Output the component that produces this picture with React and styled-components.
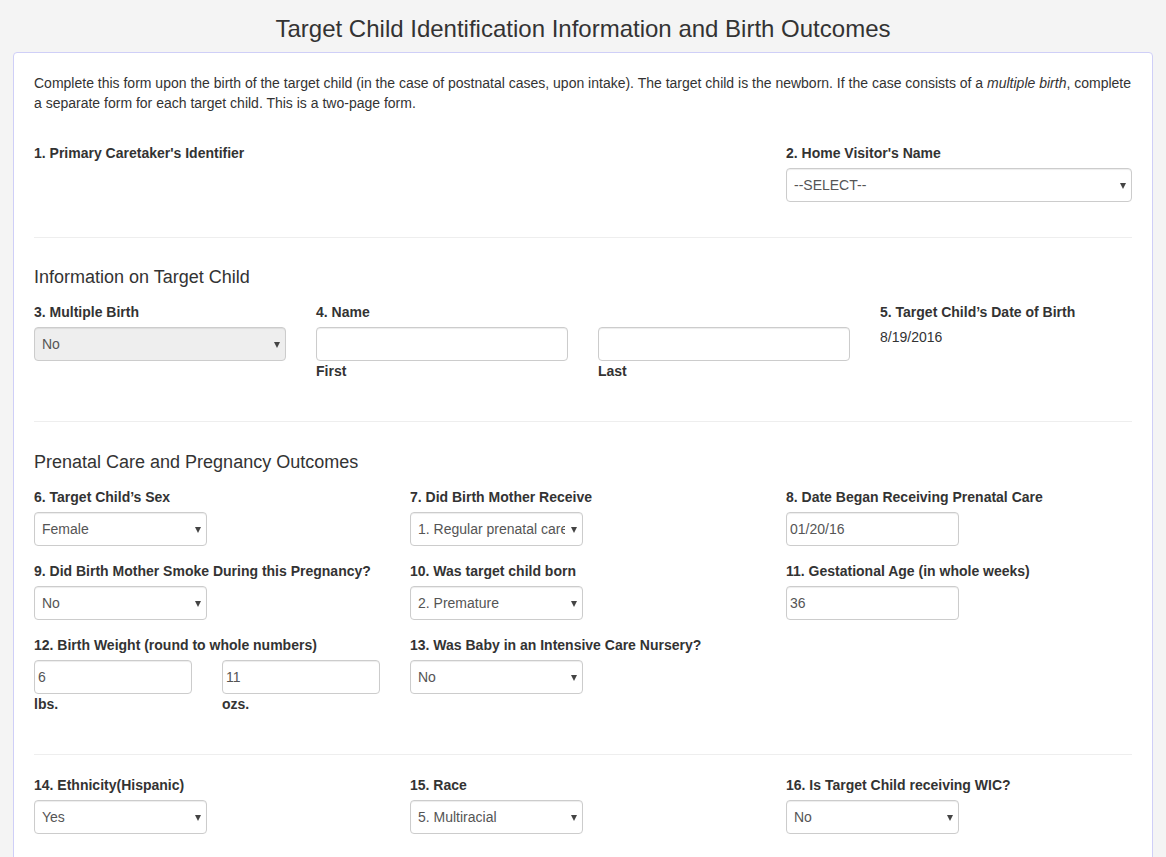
import React from "react";
import styled, { createGlobalStyle } from "styled-components";

const Global = createGlobalStyle`
  html, body { margin: 0; padding: 0; overflow: hidden; }
  body {
    background: #f4f4f4;
    font-family: "Liberation Sans", Arial, sans-serif;
    font-size: 14px;
    line-height: 20px;
    color: #333;
  }
  * { box-sizing: border-box; }
`;

const Page = styled.div`
  padding: 0 13px;
`;

const Title = styled.h1`
  margin: 0;
  padding: 16px 0 10px;
  font-size: 24px;
  line-height: 26px;
  font-weight: 400;
  text-align: center;
  color: #333;
`;

const Panel = styled.div`
  background: #fff;
  border: 1px solid #cfcff7;
  border-radius: 4px;
  padding: 20px 20px 80px;
`;

const Intro = styled.p`
  margin: 0 0 30px;
`;

const Row = styled.div`
  display: flex;
  margin: 0 -15px;
`;

const Col = styled.div`
  width: ${(p) => (p.$span / 12) * 100}%;
  padding: 0 15px;
`;

const Group = styled.div`
  padding-bottom: 15px;
`;

const Label = styled.label`
  display: block;
  font-weight: 700;
  margin-bottom: 5px;
`;

const Value = styled.div`
  color: #333;
`;

const SelectWrap = styled.div`
  position: relative;
  width: ${(p) => p.$w || "100%"};
`;

const Select = styled.select`
  display: block;
  width: 100%;
  height: 34px;
  padding: 6px 17px 6px 7px;
  font-family: inherit;
  font-size: 14px;
  color: #555;
  background-color: ${(p) => (p.disabled ? "#eee" : "#fff")};
  border: 1px solid #ccc;
  border-radius: 4px;
  box-shadow: inset 0 1px 1px rgba(0, 0, 0, 0.075);
  appearance: none;
  -webkit-appearance: none;
  opacity: 1;
`;

const Arrow = styled.span`
  position: absolute;
  right: 6px;
  top: 15px;
  width: 0;
  height: 0;
  border-left: 3.5px solid transparent;
  border-right: 3.5px solid transparent;
  border-top: 6px solid #444;
  pointer-events: none;
`;

const Input = styled.input`
  display: block;
  width: ${(p) => p.$w || "100%"};
  height: 34px;
  padding: 6px 3px;
  font-family: inherit;
  font-size: 14px;
  color: #555;
  background: #fff;
  border: 1px solid #ccc;
  border-radius: 4px;
  box-shadow: inset 0 1px 1px rgba(0, 0, 0, 0.075);
`;

const Rule = styled.hr`
  margin: 20px 0;
  border: 0;
  border-top: 1px solid #eee;
`;

const Heading = styled.h4`
  margin: ${(p) => p.$top || 30}px 0 15px;
  font-size: 18px;
  line-height: 20px;
  font-weight: 400;
  color: #333;
`;

const Sel = ({ value, w, disabled }) => (
  <SelectWrap $w={w}>
    <Select disabled={disabled} defaultValue={value}>
      <option>{value}</option>
    </Select>
    <Arrow />
  </SelectWrap>
);

export default function App() {
  return (
    <>
      <Global />
      <Page>
        <Title>Target Child Identification Information and Birth Outcomes</Title>
        <Panel>
          <Intro>
            Complete this form upon the birth of the target child (in the case of postnatal cases, upon
            intake). The target child is the newborn. If the case consists of a <em>multiple birth</em>,
            complete a separate form for each target child. This is a two-page form.
          </Intro>

          <Row>
            <Col $span={8}>
              <Group>
                <Label>1. Primary Caretaker's Identifier</Label>
              </Group>
            </Col>
            <Col $span={4}>
              <Group>
                <Label>2. Home Visitor's Name</Label>
                <Sel value="--SELECT--" />
              </Group>
            </Col>
          </Row>

          <Rule />
          <Heading $top={29}>Information on Target Child</Heading>

          <Row>
            <Col $span={3}>
              <Group>
                <Label>3. Multiple Birth</Label>
                <Sel value="No" disabled />
              </Group>
            </Col>
            <Col $span={3}>
              <Group>
                <Label>4. Name</Label>
                <Input defaultValue="" />
                <Label>First</Label>
              </Group>
            </Col>
            <Col $span={3}>
              <Group>
                <Label>&nbsp;</Label>
                <Input defaultValue="" />
                <Label>Last</Label>
              </Group>
            </Col>
            <Col $span={3}>
              <Group>
                <Label>5. Target Child’s Date of Birth</Label>
                <Value>8/19/2016</Value>
              </Group>
            </Col>
          </Row>

          <Rule />
          <Heading>Prenatal Care and Pregnancy Outcomes</Heading>

          <Row>
            <Col $span={4}>
              <Group>
                <Label>6. Target Child’s Sex</Label>
                <Sel value="Female" w="50%" />
              </Group>
            </Col>
            <Col $span={4}>
              <Group>
                <Label>7. Did Birth Mother Receive</Label>
                <Sel value="1. Regular prenatal care" w="50%" />
              </Group>
            </Col>
            <Col $span={4}>
              <Group>
                <Label>8. Date Began Receiving Prenatal Care</Label>
                <Input defaultValue="01/20/16" $w="50%" />
              </Group>
            </Col>
          </Row>

          <Row>
            <Col $span={4}>
              <Group>
                <Label>9. Did Birth Mother Smoke During this Pregnancy?</Label>
                <Sel value="No" w="50%" />
              </Group>
            </Col>
            <Col $span={4}>
              <Group>
                <Label>10. Was target child born</Label>
                <Sel value="2. Premature" w="50%" />
              </Group>
            </Col>
            <Col $span={4}>
              <Group>
                <Label>11. Gestational Age (in whole weeks)</Label>
                <Input defaultValue="36" $w="50%" />
              </Group>
            </Col>
          </Row>

          <Row>
            <Col $span={4}>
              <Group>
                <Label>12. Birth Weight (round to whole numbers)</Label>
                <Row>
                  <Col $span={6}>
                    <Input defaultValue="6" />
                    <Label>lbs.</Label>
                  </Col>
                  <Col $span={6}>
                    <Input defaultValue="11" />
                    <Label>ozs.</Label>
                  </Col>
                </Row>
              </Group>
            </Col>
            <Col $span={4}>
              <Group>
                <Label>13. Was Baby in an Intensive Care Nursery?</Label>
                <Sel value="No" w="50%" />
              </Group>
            </Col>
          </Row>

          <Rule />

          <Row>
            <Col $span={4}>
              <Group>
                <Label>14. Ethnicity(Hispanic)</Label>
                <Sel value="Yes" w="50%" />
              </Group>
            </Col>
            <Col $span={4}>
              <Group>
                <Label>15. Race</Label>
                <Sel value="5. Multiracial" w="50%" />
              </Group>
            </Col>
            <Col $span={4}>
              <Group>
                <Label>16. Is Target Child receiving WIC?</Label>
                <Sel value="No" w="50%" />
              </Group>
            </Col>
          </Row>
        </Panel>
      </Page>
    </>
  );
}
